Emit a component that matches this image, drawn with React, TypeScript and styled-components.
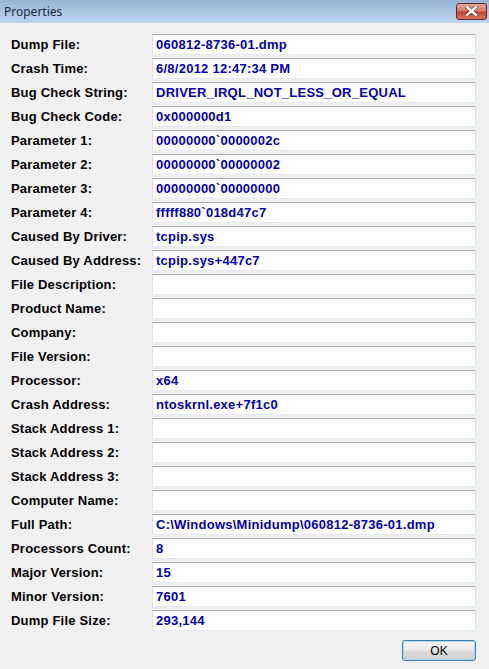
import { Fragment } from "react";
import styled, { createGlobalStyle } from "styled-components";

const GlobalStyle = createGlobalStyle`
  html, body {
    margin: 0;
    padding: 0;
    background: #f0f0f0;
  }
`

const Window = styled.div`
  width: 489px;
  height: 669px;
  display: flex;
  flex-direction: column;
  background: #f0f0f0;
  overflow: hidden;
`

const TitleBar = styled.div`
  height: 23px;
  flex-shrink: 0;
  display: flex;
  align-items: center;
  justify-content: space-between;
  padding: 0 2px 0 4px;
  background: linear-gradient(#97b3d3, #aac5e3 45%, #bcd4ec);
`

const Title = styled.span`
  font-family: "Noto Sans", "Open Sans", sans-serif;
  font-size: 12px;
  color: #1c2738;
  line-height: 1;
  margin-top: 1px;
`

const CloseButton = styled.div`
  width: 29px;
  height: 15px;
  margin-top: -1px;
  border: 1px solid #5b2a2a;
  border-radius: 3px;
  display: flex;
  align-items: center;
  justify-content: center;
  background: linear-gradient(#e7a797, #d77a64 45%, #c4452b 55%, #d8735a);
`

const Body = styled.div`
  flex: 1;
  display: flex;
  flex-direction: column;
  padding: 11px 13px 8px 11px;
`

const Grid = styled.div`
  display: grid;
  grid-template-columns: 141px 324px;
  grid-auto-rows: 21px;
  row-gap: 3px;
`

const Label = styled.div`
  font-family: "Liberation Sans", Arial, sans-serif;
  font-weight: bold;
  font-size: 13px;
  letter-spacing: 0.2px;
  color: #000;
  display: flex;
  align-items: center;
  white-space: nowrap;
`

const Field = styled.div`
  box-sizing: border-box;
  height: 21px;
  background: #fff;
  border: 1px solid #e3e9ef;
  border-top-color: #abadb3;
  border-left-color: #e2e3ea;
  border-right-color: #dbdfe6;
  padding: 0 3px;
  display: flex;
  align-items: center;
  font-family: "Liberation Sans", Arial, sans-serif;
  font-weight: bold;
  font-size: 13px;
  letter-spacing: 0.25px;
  color: #0000b4;
  white-space: nowrap;
  overflow: hidden;
`

const Footer = styled.div`
  display: flex;
  justify-content: flex-end;
  margin-top: 9px;
`

const OkButton = styled.button`
  box-sizing: border-box;
  width: 74px;
  height: 21px;
  border: 1px solid #3c7fb1;
  border-radius: 3px;
  background: linear-gradient(#f4f4f4, #ececec 45%, #dcdcdc 55%, #d0d0d0);
  box-shadow: inset 0 0 0 1px #a6dcf6;
  font-family: "Liberation Sans", Arial, sans-serif;
  font-size: 12px;
  color: #000;
  padding: 0;
`

const rows: [string, string][] = [
  ["Dump File:", "060812-8736-01.dmp"],
  ["Crash Time:", "6/8/2012 12:47:34 PM"],
  ["Bug Check String:", "DRIVER_IRQL_NOT_LESS_OR_EQUAL"],
  ["Bug Check Code:", "0x000000d1"],
  ["Parameter 1:", "00000000`0000002c"],
  ["Parameter 2:", "00000000`00000002"],
  ["Parameter 3:", "00000000`00000000"],
  ["Parameter 4:", "fffff880`018d47c7"],
  ["Caused By Driver:", "tcpip.sys"],
  ["Caused By Address:", "tcpip.sys+447c7"],
  ["File Description:", ""],
  ["Product Name:", ""],
  ["Company:", ""],
  ["File Version:", ""],
  ["Processor:", "x64"],
  ["Crash Address:", "ntoskrnl.exe+7f1c0"],
  ["Stack Address 1:", ""],
  ["Stack Address 2:", ""],
  ["Stack Address 3:", ""],
  ["Computer Name:", ""],
  ["Full Path:", "C:\\Windows\\Minidump\\060812-8736-01.dmp"],
  ["Processors Count:", "8"],
  ["Major Version:", "15"],
  ["Minor Version:", "7601"],
  ["Dump File Size:", "293,144"],
];

const App = () => {
  return (
    <>
      <GlobalStyle />
      <Window>
        <TitleBar>
          <Title>Properties</Title>
          <CloseButton>
            <svg width="13" height="10" viewBox="0 0 13 10">
              <path
                d="M2 1 L11 9 M11 1 L2 9"
                stroke="#3a2020"
                strokeWidth="4"
                strokeLinecap="square"
                opacity="0.55"
              />
              <path
                d="M2 1 L11 9 M11 1 L2 9"
                stroke="#fff"
                strokeWidth="2.4"
                strokeLinecap="square"
              />
            </svg>
          </CloseButton>
        </TitleBar>
        <Body>
          <Grid>
            {rows.map(([label, value]) => (
              <Fragment key={label}>
                <Label>{label}</Label>
                <Field>{value}</Field>
              </Fragment>
            ))}
          </Grid>
          <Footer>
            <OkButton>OK</OkButton>
          </Footer>
        </Body>
      </Window>
    </>
  )
}

export default App;
